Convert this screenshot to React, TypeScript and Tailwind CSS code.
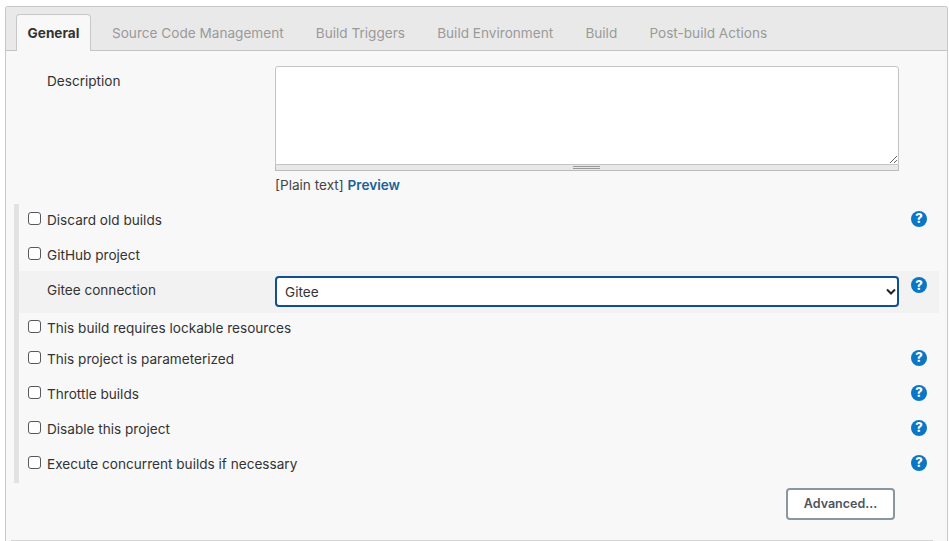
import React from "react";

const tabs = [
  "Source Code Management",
  "Build Triggers",
  "Build Environment",
  "Build",
  "Post-build Actions",
];

function Help() {
  return (
    <span className="flex h-4 w-4 items-center justify-center rounded-full bg-[#0b76c4] text-[13px] font-extrabold leading-none text-white">
      ?
    </span>
  );
}

function CheckRow({
  label,
  help,
  className,
}: {
  label: string;
  help?: boolean;
  className: string;
}) {
  return (
    <div className={`flex items-center pl-[9px] pr-[12px] ${className}`}>
      <input
        type="checkbox"
        className="h-[13px] w-[13px] shrink-0 -translate-y-px appearance-none rounded-[3px] border border-[#55585c] bg-white"
      />
      <span className="ml-[6px] translate-y-px text-[13.6px] text-[#333333]">{label}</span>
      {help && (
        <span className="ml-auto -translate-y-px">
          <Help />
        </span>
      )}
    </div>
  );
}

export default function App() {
  return (
    <div className="h-[541px] w-[949px] overflow-hidden bg-white pl-[5px] pt-[6px] font-['Inter',sans-serif]">
      <div className="h-[535px] w-[943px] rounded-t-[3px] border-x border-t border-[#c8c8c8] bg-[#f8f8f8]">
        {/* Tabs */}
        <div className="flex h-[44px] items-end rounded-t-[3px] border-b border-[#c4c4c4] bg-[#e9e9e9] pl-[10px]">
          <div className="z-10 -mb-px flex h-[37px] w-[75px] items-center justify-center rounded-t-[4px] border border-b-0 border-[#c8c8c8] bg-[#f8f8f8] text-[13.6px] font-bold text-[#333333]">
            General
          </div>
          <div className="flex h-[36px] items-center gap-[32.2px] pl-[21px] pt-[2px] text-[13.6px] text-[#9a9a9a]">
            {tabs.map((tab) => (
              <span key={tab}>{tab}</span>
            ))}
          </div>
        </div>

        {/* Description */}
        <div className="flex pt-[15px]">
          <div className="w-[269px] pl-[41px] pt-[5px] text-[13.6px] text-[#333333]">
            Description
          </div>
          <div className="w-[624px]">
            <textarea className="block h-[99px] w-full rounded-t-[3px] border border-[#c4c4c4] bg-white" />
            <div className="flex h-[6px] items-center justify-center border border-t-0 border-[#bbbbbb] bg-[#e8e8e8]">
              <div className="h-[3px] w-[27px] -translate-x-px border-y border-[#999999]" />
            </div>
            <div className="pt-[5px] text-[13.6px] leading-[18px] text-[#444444]">
              [Plain text]{" "}
              <span className="font-semibold text-[#1b6196]">Preview</span>
            </div>
          </div>
        </div>

        {/* Options */}
        <div className="ml-[8px] mt-[10px] w-[925px] border-l-[5px] border-[#e2e2e2]">
          <CheckRow label="Discard old builds" help className="h-[35px] pb-[4px]" />
          <CheckRow label="GitHub project" className="h-[32px] pb-[2px]" />
          <div className="flex h-[42px] bg-[#f2f2f2] pt-[5px]">
            <div className="w-[256px] pl-[28px] pt-[5px] text-[13.6px] leading-[18px] text-[#333333]">
              Gitee connection
            </div>
            <div className="relative h-[31px] w-[624px]">
              <select className="h-[31px] w-full appearance-none rounded-[4px] border-[2px] border-[#11508f] bg-white pl-[8px] pt-[2px] text-[13.6px] text-[#333333]">
                <option>Gitee</option>
              </select>
              <svg
                className="pointer-events-none absolute right-[3px] top-[12px]"
                width="10"
                height="8"
                viewBox="0 0 10 8"
              >
                <path d="M1 1.5 5 5.5 9 1.5" fill="none" stroke="#222222" strokeWidth="2" />
              </svg>
            </div>
            <div className="ml-[12px] pt-[1px]">
              <Help />
            </div>
          </div>
          <CheckRow label="This build requires lockable resources" className="h-[31px] pb-[2px]" />
          <CheckRow label="This project is parameterized" help className="h-[33px] pb-[4px]" />
          <CheckRow label="Throttle builds" help className="h-[35px] pb-[2px]" />
          <CheckRow label="Disable this project" help className="h-[35px] pb-[2px]" />
          <CheckRow label="Execute concurrent builds if necessary" help className="h-[36px] pb-[3px]" />
        </div>

        {/* Advanced */}
        <div className="flex justify-end pr-[52px] pt-[5px]">
          <button className="h-[32px] w-[109px] rounded-[4px] border-[2px] border-[#8b979e] bg-white text-[12.5px] font-semibold text-[#4d545d]">
            Advanced...
          </button>
        </div>
        <div className="ml-[5px] mt-[20px] w-[922px] border-t border-[#d4d4d4]" />
      </div>
    </div>
  );
}
